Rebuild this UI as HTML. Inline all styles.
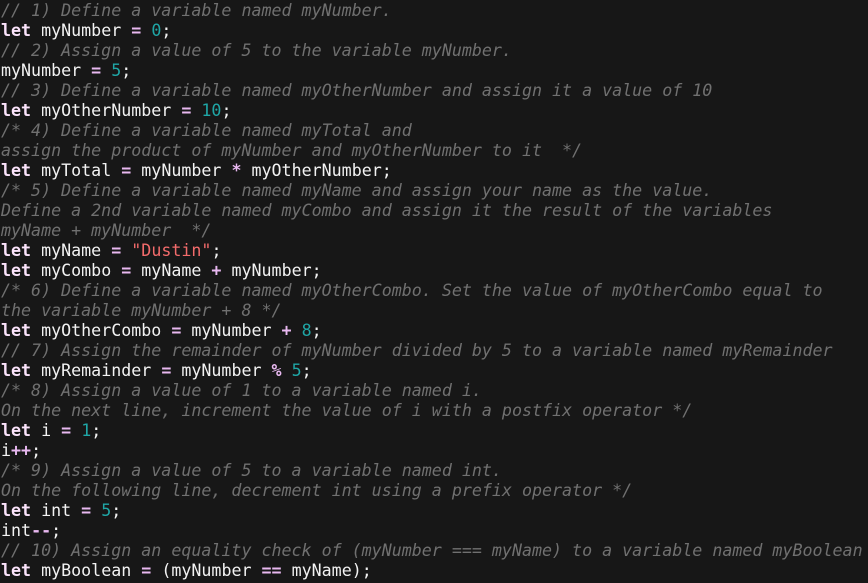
<!DOCTYPE html><html><head><style>
body{margin:0;background:#171717;width:868px;height:583px;overflow:hidden}
pre{margin:0;padding:0 0 0 1px;font-family:"DejaVu Sans Mono","Liberation Mono",monospace;font-size:16.65px;line-height:20px;color:#f2f2f2;position:relative;top:1px}
.c{color:#707070;font-style:italic}
.k{color:#fbe3fb;font-weight:bold}
.n{color:#1fa6a6}
.s{color:#f26b6b}
.o{color:#e8b8f0;font-weight:bold}
</style></head><body><pre><span class="c">// 1) Define a variable named myNumber.</span>
<span class="k">let</span> myNumber <span class="o">=</span> <span class="n">0</span>;
<span class="c">// 2) Assign a value of 5 to the variable myNumber.</span>
myNumber <span class="o">=</span> <span class="n">5</span>;
<span class="c">// 3) Define a variable named myOtherNumber and assign it a value of 10</span>
<span class="k">let</span> myOtherNumber <span class="o">=</span> <span class="n">10</span>;
<span class="c">/* 4) Define a variable named myTotal and
assign the product of myNumber and myOtherNumber to it  */</span>
<span class="k">let</span> myTotal <span class="o">=</span> myNumber <span class="o">*</span> myOtherNumber;
<span class="c">/* 5) Define a variable named myName and assign your name as the value.
Define a 2nd variable named myCombo and assign it the result of the variables
myName + myNumber  */</span>
<span class="k">let</span> myName <span class="o">=</span> <span class="s">"Dustin"</span>;
<span class="k">let</span> myCombo <span class="o">=</span> myName <span class="o">+</span> myNumber;
<span class="c">/* 6) Define a variable named myOtherCombo. Set the value of myOtherCombo equal to
the variable myNumber + 8 */</span>
<span class="k">let</span> myOtherCombo <span class="o">=</span> myNumber <span class="o">+</span> <span class="n">8</span>;
<span class="c">// 7) Assign the remainder of myNumber divided by 5 to a variable named myRemainder</span>
<span class="k">let</span> myRemainder <span class="o">=</span> myNumber <span class="o">%</span> <span class="n">5</span>;
<span class="c">/* 8) Assign a value of 1 to a variable named i.
On the next line, increment the value of i with a postfix operator */</span>
<span class="k">let</span> i <span class="o">=</span> <span class="n">1</span>;
i<span class="o">++</span>;
<span class="c">/* 9) Assign a value of 5 to a variable named int.
On the following line, decrement int using a prefix operator */</span>
<span class="k">let</span> int <span class="o">=</span> <span class="n">5</span>;
int<span class="o">--</span>;
<span class="c">// 10) Assign an equality check of (myNumber === myName) to a variable named myBoolean</span>
<span class="k">let</span> myBoolean <span class="o">=</span> (myNumber <span class="o">==</span> myName);</pre></body></html>
